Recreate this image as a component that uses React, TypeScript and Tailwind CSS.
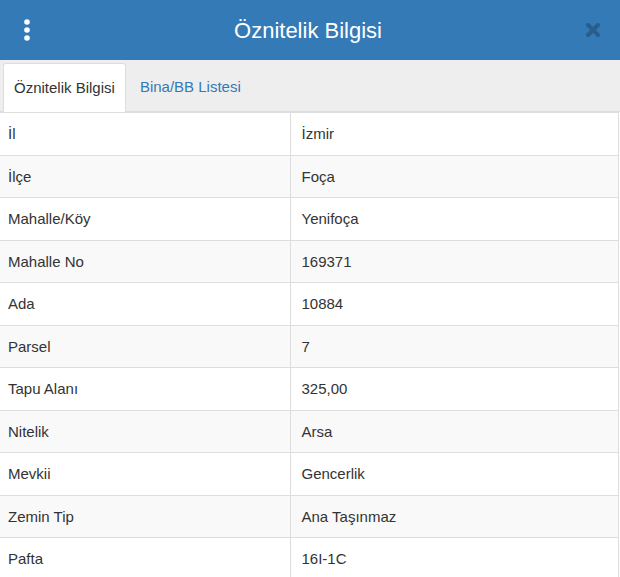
const rows: [string, string][] = [
  ['İl', 'İzmir'],
  ['İlçe', 'Foça'],
  ['Mahalle/Köy', 'Yenifoça'],
  ['Mahalle No', '169371'],
  ['Ada', '10884'],
  ['Parsel', '7'],
  ['Tapu Alanı', '325,00'],
  ['Nitelik', 'Arsa'],
  ['Mevkii', 'Gencerlik'],
  ['Zemin Tip', 'Ana Taşınmaz'],
  ['Pafta', '16I-1C'],
];

function KebabIcon() {
  return (
    <svg width="8" height="24" viewBox="0 0 8 24" aria-hidden="true">
      <circle cx="4" cy="4" r="2.8" fill="#fff" />
      <circle cx="4" cy="12" r="2.8" fill="#fff" />
      <circle cx="4" cy="20" r="2.8" fill="#fff" />
    </svg>
  );
}

function CloseIcon() {
  return (
    <svg width="16" height="16" viewBox="0 0 16 16" aria-hidden="true">
      <path d="M3 3 L13 13 M13 3 L3 13" stroke="#285d8c" strokeWidth="4" strokeLinecap="round" />
    </svg>
  );
}

export default function App() {
  return (
    <div
      className="w-[620px] h-[577px] overflow-hidden bg-white text-[#333] text-[15px]"
      style={{ fontFamily: '"Liberation Sans", Arial, sans-serif' }}
    >
      <div className="flex h-[60px] items-center bg-[#337ab7] px-[23px]">
        <button className="flex w-[8px] items-center justify-center">
          <KebabIcon />
        </button>
        <h4 className="flex-1 text-center text-[22px] text-white">Öznitelik Bilgisi</h4>
        <button className="flex w-[16px] items-center justify-center -mr-[4px]">
          <CloseIcon />
        </button>
      </div>

      <div className="flex h-[52px] items-end border-b border-[#ddd] bg-[#eee] pl-[3px]">
        <div className="-mb-px flex h-[49px] items-center rounded-t-[3px] border border-b-0 border-[#ddd] bg-white px-[10px]">
          Öznitelik Bilgisi
        </div>
        <div className="flex h-[48px] items-center px-[14px] text-[#337ab7]">Bina/BB Listesi</div>
      </div>

      <table className="w-[619px] border-collapse border-r border-[#ddd]">
        <tbody>
          {rows.map(([label, value], i) => (
            <tr key={label} className={i % 2 === 1 ? 'bg-[#f9f9f9]' : 'bg-white'}>
              <td className="w-[290px] border-t border-r border-[#ddd] px-[8px] py-[10px] leading-[21.5px]">
                {label}
              </td>
              <td className="border-t border-[#ddd] px-[11px] py-[10px] leading-[21.5px]">{value}</td>
            </tr>
          ))}
        </tbody>
      </table>
    </div>
  );
}
